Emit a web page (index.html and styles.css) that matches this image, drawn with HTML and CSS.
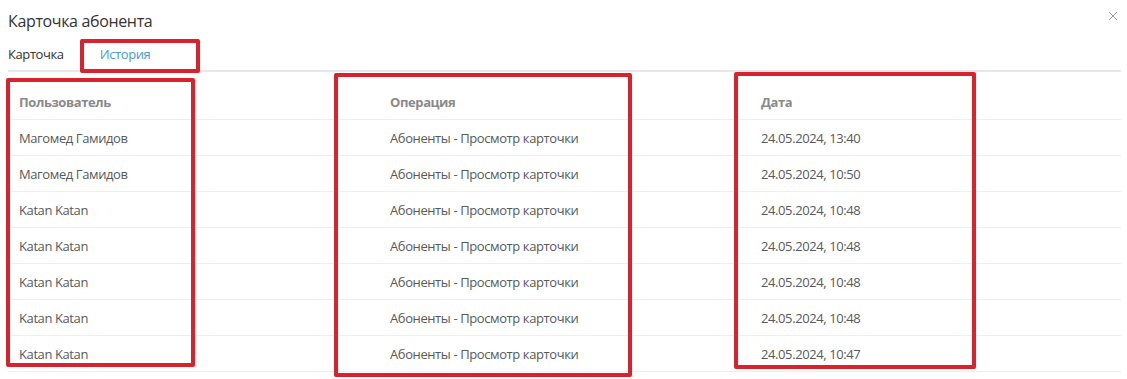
FILE: index.html
```html
<!DOCTYPE html>
<html lang="ru">
<head>
  <meta charset="UTF-8" />
  <meta name="viewport" content="width=device-width, initial-scale=1" />
  <title>Карточка абонента</title>
  <link rel="stylesheet" href="styles.css">
</head>
<body>

  <div class="modal">
    <div class="modal-header">
      <h1>Карточка абонента</h1>
      <button class="close" aria-label="Закрыть">
        <svg width="10" height="10" viewBox="0 0 10 10">
          <path d="M1 1 L9 9 M9 1 L1 9" stroke="#9a9a9a" stroke-width="1" fill="none" />
        </svg>
      </button>
    </div>

    <div class="tabs">
      <div class="tab">Карточка</div>
      <div class="tab active">История</div>
    </div>

    <table class="history">
      <thead>
        <tr>
          <th>Пользователь</th>
          <th>Операция</th>
          <th>Дата</th>
        </tr>
      </thead>
      <tbody>
        <tr><td>Магомед Гамидов</td><td>Абоненты - Просмотр карточки</td><td>24.05.2024, 13:40</td></tr>
        <tr><td>Магомед Гамидов</td><td>Абоненты - Просмотр карточки</td><td>24.05.2024, 10:50</td></tr>
        <tr><td>Katan Katan</td><td>Абоненты - Просмотр карточки</td><td>24.05.2024, 10:48</td></tr>
        <tr><td>Katan Katan</td><td>Абоненты - Просмотр карточки</td><td>24.05.2024, 10:48</td></tr>
        <tr><td>Katan Katan</td><td>Абоненты - Просмотр карточки</td><td>24.05.2024, 10:48</td></tr>
        <tr><td>Katan Katan</td><td>Абоненты - Просмотр карточки</td><td>24.05.2024, 10:48</td></tr>
        <tr><td>Katan Katan</td><td>Абоненты - Просмотр карточки</td><td>24.05.2024, 10:47</td></tr>
      </tbody>
    </table>

    <!-- red annotation frames -->
    <div class="mark mark-tab"></div>
    <div class="mark mark-user"></div>
    <div class="mark mark-op"></div>
    <div class="mark mark-date"></div>
  </div>

</body>
</html>
```

FILE: styles.css
```css
body {
  margin: 0;
  font-family: 'Open Sans', 'Noto Sans', sans-serif;
  background: #ffffff;
  color: #555;
}

.modal {
  position: relative;
  padding: 10px 6px 0 8px;
  height: 379px;
  box-sizing: border-box;
}

.modal-header {
  display: flex;
  justify-content: space-between;
  align-items: flex-start;
}

h1 {
  margin: 0;
  font-size: 16px;
  font-weight: 400;
  line-height: 22px;
  letter-spacing: -0.35px;
  color: #333;
}

.close {
  border: none;
  background: none;
  padding: 0;
  margin: -1px 3px 0 0;
  width: 10px;
  height: 10px;
  cursor: pointer;
}

.tabs {
  display: flex;
  border-bottom: 2px solid #e8e8ec;
}

.tab {
  padding: 13px 18px 7px;
  font-size: 13px;
  line-height: 18px;
  letter-spacing: -0.4px;
  color: #333;
}

.tab:first-child {
  padding-left: 0;
}

.tab.active {
  color: #4a9ad6;
}

.history {
  width: 100%;
  margin-top: 12px;
  border-collapse: collapse;
  table-layout: fixed;
  font-size: 13px;
  letter-spacing: -0.4px;
}

.history th,
.history td {
  height: 35px;
  padding: 0 11px;
  text-align: left;
  border-bottom: 1px solid #eeeeee;
}

.history th {
  font-weight: 700;
  color: #8a8a8a;
}

.history td {
  color: #595959;
}

.mark {
  position: absolute;
  border: 4px solid #d8222d;
  border-radius: 2px;
  box-sizing: border-box;
}

.mark-tab {
  left: 80px;
  top: 39px;
  width: 120px;
  height: 34px;
}

.mark-user {
  left: 6px;
  top: 78px;
  width: 189px;
  height: 289px;
}

.mark-op {
  left: 334px;
  top: 73px;
  width: 298px;
  height: 304px;
}

.mark-date {
  left: 734px;
  top: 72px;
  width: 242px;
  height: 297px;
}
```
